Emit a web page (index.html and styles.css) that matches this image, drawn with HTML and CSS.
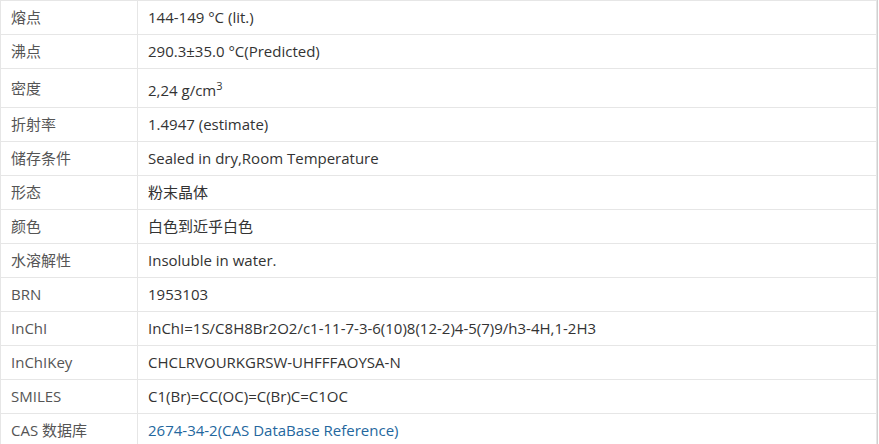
FILE: index.html
```html
<!DOCTYPE html>
<html lang="zh-CN">
<head>
<meta charset="utf-8">
<link rel="stylesheet" href="styles.css">
</head>
<body>
<table class="props">
<tr><td class="k">熔点</td><td class="v">144-149 °C (lit.)</td></tr>
<tr><td class="k">沸点</td><td class="v">290.3±35.0 °C(Predicted)</td></tr>
<tr><td class="k">密度</td><td class="v">2,24 g/cm<sup>3</sup></td></tr>
<tr><td class="k">折射率</td><td class="v">1.4947 (estimate)</td></tr>
<tr><td class="k">储存条件</td><td class="v">Sealed in dry,Room Temperature</td></tr>
<tr><td class="k">形态</td><td class="v">粉末晶体</td></tr>
<tr><td class="k">颜色</td><td class="v">白色到近乎白色</td></tr>
<tr><td class="k">水溶解性</td><td class="v">Insoluble in water.</td></tr>
<tr><td class="k">BRN</td><td class="v">1953103</td></tr>
<tr><td class="k">InChI</td><td class="v">InChI=1S/C8H8Br2O2/c1-11-7-3-6(10)8(12-2)4-5(7)9/h3-4H,1-2H3</td></tr>
<tr><td class="k">InChIKey</td><td class="v">CHCLRVOURKGRSW-UHFFFAOYSA-N</td></tr>
<tr><td class="k">SMILES</td><td class="v">C1(Br)=CC(OC)=C(Br)C=C1OC</td></tr>
<tr><td class="k">CAS 数据库</td><td class="v"><a class="link" href="#">2674-34-2(CAS DataBase Reference)</a></td></tr>
</table>
</body>
</html>
```
FILE: styles.css
```css
html, body {
  margin: 0;
  padding: 0;
  background: #fff;
}
body {
  font-family: "Open Sans", "Noto Sans CJK SC", sans-serif;
  font-size: 15px;
  color: #333;
  border-right: 1px solid #d0d0d0;
  width: 877px;
}
.props {
  border-collapse: collapse;
  width: 877px;
}
.props td {
  border: 1px solid #e6e6e6;
  padding: 7px 10px;
  line-height: 19px;
  height: 19px;
  vertical-align: middle;
}
.k {
  width: 116px;
  color: #555;
}
.v {
  color: #333;
}
sup {
  font-size: 11px;
  line-height: 20px;
  vertical-align: 6px;
}
.link {
  color: #24679e;
  text-decoration: none;
}
```
